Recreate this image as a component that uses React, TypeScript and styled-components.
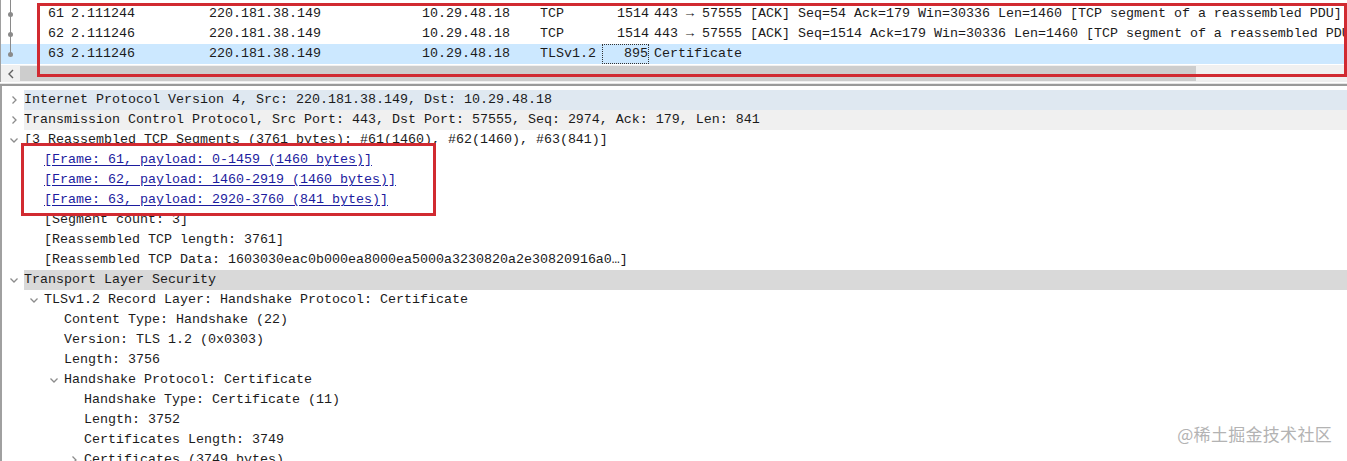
import React from 'react';
import styled, { createGlobalStyle } from 'styled-components';

const GlobalStyle = createGlobalStyle`
  html, body {
    margin: 0;
    padding: 0;
    background: #ffffff;
    overflow: hidden;
  }
  body {
    font-family: 'Liberation Mono', 'DejaVu Sans Mono', monospace;
    font-size: 13.33px;
    color: #1b1b1b;
  }
`;

const Page = styled.div`
  position: relative;
  width: 1347px;
  height: 461px;
  overflow: hidden;
  display: flex;
  flex-direction: column;
`;

// ---- packet list ----
const PacketList = styled.div`
  position: relative;
  padding-top: 4px;
  border-left: 1px solid #a0a0a0;
  height: 83px;
  box-sizing: border-box;
  display: flex;
  flex-direction: column;
`;

const PacketRow = styled.div<{ $selected?: boolean }>`
  display: flex;
  height: 20px;
  line-height: 20px;
  white-space: nowrap;
  background: ${(p) => (p.$selected ? '#cce8ff' : 'transparent')};
`;

const Gutter = styled.div<{ $last?: boolean }>`
  position: relative;
  width: 26px;
  flex: none;
  &::before {
    content: '';
    position: absolute;
    left: 9px;
    top: -4px;
    height: ${(p) => (p.$last ? '14px' : '24px')};
    width: 1px;
    background: #8a8a8a;
  }
  &::after {
    content: '';
    position: absolute;
    left: 7px;
    top: 8px;
    width: 5px;
    height: 5px;
    border-radius: 50%;
    background: #8a8a8a;
  }
`;

const Cell = styled.div<{ $w: number; $right?: boolean }>`
  width: ${(p) => p.$w}px;
  flex: none;
  text-align: ${(p) => (p.$right ? 'right' : 'left')};
  box-sizing: border-box;
`;

const TimeCell = styled(Cell)`
  padding-left: 7px;
`;

const FocusCell = styled(Cell)`
  outline: 1px dotted #333;
  outline-offset: -1px;
  padding-right: 1px;
`;

const Info = styled.div`
  padding-left: 5px;
  flex: none;
`;

const HScroll = styled.div`
  margin-top: 1px;
  height: 17px;
  display: flex;
  align-items: center;
  background: #f0f0f0;
`;

const ScrollArrow = styled.div`
  width: 19px;
  height: 17px;
  flex: none;
  display: flex;
  align-items: center;
  justify-content: center;
  color: #606060;
`;

const Thumb = styled.div`
  width: 1176px;
  height: 15px;
  background: #cdcdcd;
  flex: none;
`;

const Track = styled.div`
  flex: 1;
`;

const Splitter = styled.div`
  height: 4px;
  border-top: 1px solid #e6e6e6;
  border-bottom: 2px solid #9a9a9a;
  margin-top: 1px;
`;

// ---- details ----
const Details = styled.div`
  flex: 1;
  border-left: 2px solid #a0a0a0;
  padding-top: 4px;
`;

const TreeRow = styled.div<{ $level: number }>`
  display: flex;
  align-items: center;
  height: 20px;
  line-height: 20px;
  white-space: nowrap;
  padding-left: ${(p) => 2 + p.$level * 20}px;
`;

const Toggle = styled.div`
  width: 20px;
  flex: none;
  display: flex;
  align-items: center;
  justify-content: center;
  color: #8c8c8c;
`;

const Label = styled.div<{ $bg?: string }>`
  flex: 1;
  background: ${(p) => p.$bg || 'transparent'};
`;

const Link = styled.span`
  color: #1c1c9e;
  text-decoration: underline;
  text-underline-offset: 2px;
`;

const Annotation = styled.div`
  position: absolute;
  border: 3px solid #d12a31;
  box-sizing: border-box;
  pointer-events: none;
`;

const Watermark = styled.div`
  position: absolute;
  right: 15px;
  bottom: 15px;
  font-family: 'Noto Sans CJK SC', 'Noto Sans', sans-serif;
  font-size: 17px;
  color: #b3b3b3;
  letter-spacing: 0.3px;
`;

const Chevron = ({ open }: { open?: boolean }) => (
  <svg width="10" height="10" viewBox="0 0 10 10">
    {open ? (
      <path d="M1.5 3.5 L5 7 L8.5 3.5" fill="none" stroke="currentColor" strokeWidth="1.3" />
    ) : (
      <path d="M3.5 1.5 L7 5 L3.5 8.5" fill="none" stroke="currentColor" strokeWidth="1.3" />
    )}
  </svg>
);

const packets = [
  {
    no: '61',
    time: '2.111244',
    src: '220.181.38.149',
    dst: '10.29.48.18',
    proto: 'TCP',
    len: '1514',
    info: '443 → 57555 [ACK] Seq=54 Ack=179 Win=30336 Len=1460 [TCP segment of a reassembled PDU]',
  },
  {
    no: '62',
    time: '2.111246',
    src: '220.181.38.149',
    dst: '10.29.48.18',
    proto: 'TCP',
    len: '1514',
    info: '443 → 57555 [ACK] Seq=1514 Ack=179 Win=30336 Len=1460 [TCP segment of a reassembled PDU]',
  },
  {
    no: '63',
    time: '2.111246',
    src: '220.181.38.149',
    dst: '10.29.48.18',
    proto: 'TLSv1.2',
    len: '895',
    info: 'Certificate',
  },
];

type Node = {
  level: number;
  text: string;
  toggle?: 'open' | 'closed';
  bg?: string;
  link?: boolean;
};

const tree: Node[] = [
  { level: 0, toggle: 'closed', bg: '#dfe8f1', text: 'Internet Protocol Version 4, Src: 220.181.38.149, Dst: 10.29.48.18' },
  { level: 0, toggle: 'closed', bg: '#f0f0f0', text: 'Transmission Control Protocol, Src Port: 443, Dst Port: 57555, Seq: 2974, Ack: 179, Len: 841' },
  { level: 0, toggle: 'open', text: '[3 Reassembled TCP Segments (3761 bytes): #61(1460), #62(1460), #63(841)]' },
  { level: 1, link: true, text: '[Frame: 61, payload: 0-1459 (1460 bytes)]' },
  { level: 1, link: true, text: '[Frame: 62, payload: 1460-2919 (1460 bytes)]' },
  { level: 1, link: true, text: '[Frame: 63, payload: 2920-3760 (841 bytes)]' },
  { level: 1, text: '[Segment count: 3]' },
  { level: 1, text: '[Reassembled TCP length: 3761]' },
  { level: 1, text: '[Reassembled TCP Data: 1603030eac0b000ea8000ea5000a3230820a2e30820916a0…]' },
  { level: 0, toggle: 'open', bg: '#d9d9d9', text: 'Transport Layer Security' },
  { level: 1, toggle: 'open', text: 'TLSv1.2 Record Layer: Handshake Protocol: Certificate' },
  { level: 2, text: 'Content Type: Handshake (22)' },
  { level: 2, text: 'Version: TLS 1.2 (0x0303)' },
  { level: 2, text: 'Length: 3756' },
  { level: 2, toggle: 'open', text: 'Handshake Protocol: Certificate' },
  { level: 3, text: 'Handshake Type: Certificate (11)' },
  { level: 3, text: 'Length: 3752' },
  { level: 3, text: 'Certificates Length: 3749' },
  { level: 3, toggle: 'closed', text: 'Certificates (3749 bytes)' },
];

export default function App() {
  return (
    <Page>
      <GlobalStyle />
      <PacketList>
        {packets.map((p, i) => {
          const selected = i === packets.length - 1;
          const LenCell = selected ? FocusCell : Cell;
          return (
            <PacketRow key={p.no} $selected={selected}>
              <Gutter $last={selected} />
              <Cell $w={37} $right>
                {p.no}
              </Cell>
              <TimeCell $w={145}>{p.time}</TimeCell>
              <Cell $w={213}>{p.src}</Cell>
              <Cell $w={118}>{p.dst}</Cell>
              <Cell $w={62}>{p.proto}</Cell>
              <LenCell $w={47} $right>
                {p.len}
              </LenCell>
              <Info>{p.info}</Info>
            </PacketRow>
          );
        })}
        <HScroll>
          <ScrollArrow>
            <svg width="8" height="10" viewBox="0 0 8 10">
              <path d="M6 1 L2 5 L6 9" fill="none" stroke="currentColor" strokeWidth="1.4" />
            </svg>
          </ScrollArrow>
          <Thumb />
          <Track />
        </HScroll>
      </PacketList>
      <Splitter />
      <Details>
        {tree.map((n, i) => (
          <TreeRow key={i} $level={n.level}>
            <Toggle>{n.toggle && <Chevron open={n.toggle === 'open'} />}</Toggle>
            <Label $bg={n.bg}>{n.link ? <Link>{n.text}</Link> : n.text}</Label>
          </TreeRow>
        ))}
      </Details>
      <Annotation style={{ left: 37, top: 3, width: 1310, height: 74 }} />
      <Annotation style={{ left: 21, top: 143, width: 415, height: 73 }} />
      <Watermark>@稀土掘金技术社区</Watermark>
    </Page>
  );
}
